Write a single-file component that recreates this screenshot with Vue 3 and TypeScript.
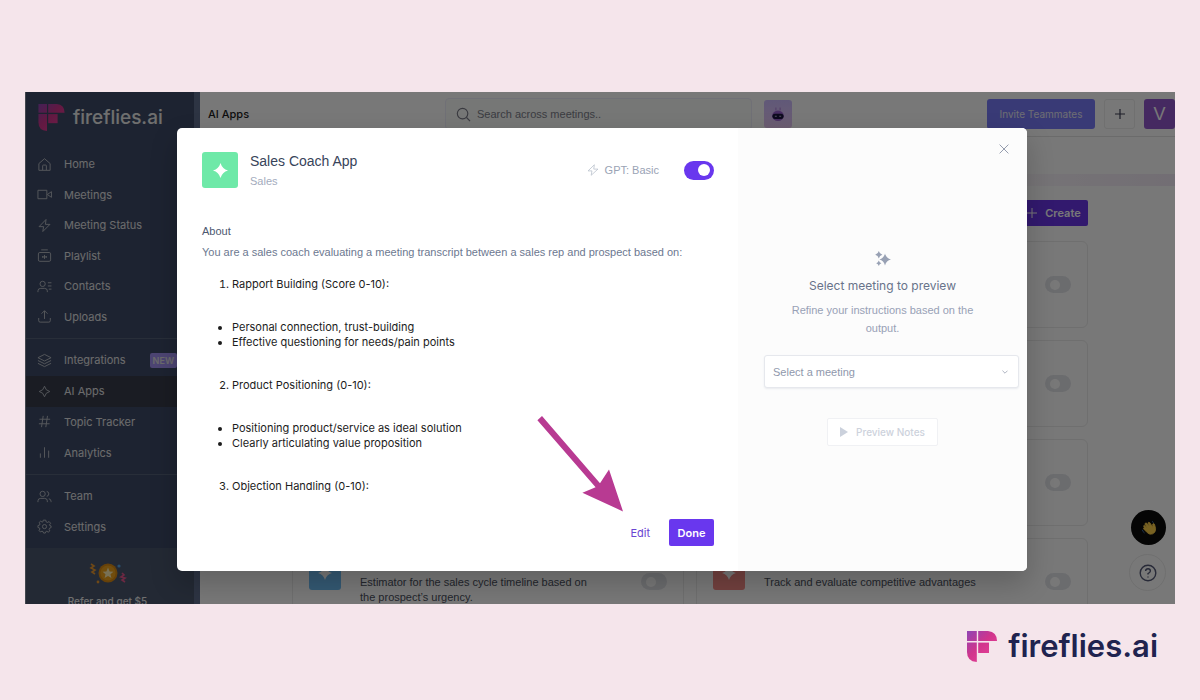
<script setup lang="ts">
interface NavItem {
  label: string
  icon: string[]
  badge?: string
  active?: boolean
}

interface AppCard {
  tone: string
  text?: string
}

const navGroups: NavItem[][] = [
  [
    { label: 'Home', icon: ['M2 7 8 1.8 14 7V14.2H2Z', 'M6 14V9.4Q6 8.6 6.8 8.6H9.2Q10 8.6 10 9.4V14'] },
    { label: 'Meetings', icon: ['M1 3.5H10.5V12.5H1Z', 'M11 8 15.4 5V11Z'] },
    { label: 'Meeting Status', icon: ['M9.6 1.6 2.2 9.2H7L6.2 14.4 13.8 6.8H9Z'] },
    { label: 'Playlist', icon: ['M3 4.8H13Q14.5 4.8 14.5 6.3V12.7Q14.5 14.2 13 14.2H3Q1.5 14.2 1.5 12.7V6.3Q1.5 4.8 3 4.8Z', 'M4.5 2H11.5', 'M8 7.4V11.6M6 8.6V10.4M10 8.6V10.4M6 9.5H10'] },
    { label: 'Contacts', icon: ['M6 2.4A2.8 2.8 0 1 1 6 8 2.8 2.8 0 1 1 6 2.4', 'M1 14V12.6Q1 10 4 10H8Q11 10 11 12.6V14', 'M11.6 4H15.4M11.6 7.4H15.4M12.6 10.8H15.4'] },
    { label: 'Uploads', icon: ['M8 10.6V2M4.8 5 8 1.8 11.2 5', 'M1.8 9.6V12.4Q1.8 14 3.4 14H12.6Q14.2 14 14.2 12.4V9.6'] }
  ],
  [
    { label: 'Integrations', badge: 'NEW', icon: ['M8 1.5 15 5 8 8.5 1 5Z', 'M1 8 8 11.5 15 8', 'M1 11 8 14.5 15 11'] },
    { label: 'AI Apps', active: true, icon: ['M8 2.4Q9 7 13.6 8 9 9 8 13.6 7 9 2.4 8 7 7 8 2.4Z'] },
    { label: 'Topic Tracker', icon: ['M6.6 2 4.8 14M11.2 2 9.4 14M2.6 5.6H14M2 10.4H13.4'] },
    { label: 'Analytics', icon: ['M3.6 9V13.6M8 2.4V13.6M12.4 6V13.6'] }
  ],
  [
    { label: 'Team', icon: ['M6 2.4A2.8 2.8 0 1 1 6 8 2.8 2.8 0 1 1 6 2.4', 'M1 14V12.6Q1 10 4 10H8Q11 10 11 12.6V14', 'M10.4 2.6Q12.6 3 12.6 5.2 12.6 7.4 10.4 7.8', 'M12.6 10.4Q15 10.8 15 13.2V14'] },
    { label: 'Settings', icon: ['M6.7 1.2H9.3L9.8 3.1 11.2 3.7 12.9 2.7 14.5 4.6 13.3 6.2 13.6 7 15 7.4V9.2L13.4 9.8 12.9 11.1 13.7 12.7 12 14 10.4 13.1 9.4 13.5 8.9 15H7L6.4 13.4 5.3 13 3.6 13.8 2.2 12.3 3.1 10.6 2.7 9.6 1 9V7L2.7 6.5 3.2 5.3 2.3 3.7 3.9 2.3 5.5 3.3 6.3 3Z', 'M8 5.9A2.2 2.2 0 1 1 8 10.3 2.2 2.2 0 1 1 8 5.9'] }
  ]
]

const cards: AppCard[] = [
  { tone: 'blue' }, { tone: 'red' },
  { tone: 'blue' }, { tone: 'red' },
  { tone: 'blue' }, { tone: 'red' },
  { tone: 'blue', text: 'Estimator for the sales cycle timeline based on the prospect’s urgency.' },
  { tone: 'red', text: 'Track and evaluate competitive advantages' }
]

const steps = [
  { title: 'Rapport Building (Score 0-10):', points: ['Personal connection, trust-building', 'Effective questioning for needs/pain points'] },
  { title: 'Product Positioning (0-10):', points: ['Positioning product/service as ideal solution', 'Clearly articulating value proposition'] },
  { title: 'Objection Handling (0-10):', points: [] as string[] }
]

const spark = 'M8 0Q9.8 6.2 16 8 9.8 9.8 8 16 6.2 9.8 0 8 6.2 6.2 8 0Z'
</script>

<template>
  <div class="page">
    <svg width="0" height="0" class="defs" aria-hidden="true">
      <defs>
        <linearGradient id="brand" x1="0" y1="0" x2="30" y2="31" gradientUnits="userSpaceOnUse">
          <stop offset="0" stop-color="#8f45b5" />
          <stop offset="0.45" stop-color="#d0358c" />
          <stop offset="1" stop-color="#f0439a" />
        </linearGradient>
        <symbol id="mark" viewBox="0 0 30 31">
          <g fill="url(#brand)">
            <path d="M0 0H9.8V10H0Z" />
            <path d="M11.2 0H21Q30 1 30 10H11.2Z" />
            <path d="M0 11.6H9.8V31Q0 30.5 0 21Z" />
            <path d="M11.2 11.6H22V22H11.2Z" />
          </g>
        </symbol>
      </defs>
    </svg>

    <div class="window">
      <aside class="sidebar">
        <div class="brand">
          <svg class="brand-mark"><use href="#mark" /></svg>
          <span>fireflies.ai</span>
        </div>
        <nav>
          <ul v-for="(group, g) in navGroups" :key="g" class="group" :class="'group-' + group.length">
            <li v-for="item in group" :key="item.label">
              <a href="#" :class="{ active: item.active }">
                <svg viewBox="0 0 16 16" class="nav-icon"><path v-for="d in item.icon" :key="d" :d="d" /></svg>
                <span>{{ item.label }}</span>
                <b v-if="item.badge">{{ item.badge }}</b>
              </a>
            </li>
          </ul>
        </nav>
        <div class="refer">
          <svg viewBox="0 0 38 22" width="38" height="22">
            <circle cx="19" cy="11" r="9.5" fill="#d98a14" />
            <circle cx="19" cy="11" r="7.6" fill="#f0a41c" />
            <path d="M19 5.6 20.6 9.4 24.4 9.7 21.5 12.2 22.4 16 19 13.9 15.6 16 16.5 12.2 13.6 9.7 17.4 9.4Z" fill="#fff0b8" />
            <path d="M2 2 5 4 2 6 6 8 3 10 6 12" fill="none" stroke="#eb9a2f" stroke-width="1.6" />
            <path d="M33 11 35 13 32 15 36 16 33 18 36 20" fill="none" stroke="#e8568c" stroke-width="1.6" />
            <circle cx="30" cy="4" r="1.6" fill="#58a6e8" />
            <circle cx="9" cy="20" r="1.4" fill="#eb9a2f" />
          </svg>
          <strong>Refer and get $5</strong>
        </div>
      </aside>

      <main class="main">
        <header class="topbar">
          <h1>AI Apps</h1>
          <label class="search">
            <svg viewBox="0 0 16 16" width="15" height="15"><circle cx="7" cy="7" r="5.6" /><path d="M11.2 11.2 15 15" /></svg>
            <input type="text" placeholder="Search across meetings.." aria-label="Search" />
          </label>
          <button class="bot" aria-label="Bot">
            <svg viewBox="0 0 16 18" width="14" height="16">
              <path d="M5.6 5V1.6M10.4 5V1.6" stroke="#a878d8" fill="none" />
              <ellipse cx="8" cy="11" rx="6.6" ry="6" fill="#9a63d0" />
              <rect x="1.6" y="8.8" width="12.8" height="5.8" rx="2.9" fill="#1c1740" />
              <path d="M4.4 11.6H6.6M9.4 11.6H11.6" stroke="#c9c2e6" stroke-width="1" />
            </svg>
          </button>
          <div class="actions">
            <button class="invite">Invite Teammates</button>
            <button class="plus" aria-label="Add"><svg viewBox="0 0 12 12" width="12" height="12"><path d="M6 1V11M1 6H11" /></svg></button>
            <button class="avatar">V</button>
          </div>
        </header>
        <div class="band"></div>
        <section class="apps">
          <button class="create">
            <svg viewBox="0 0 12 12" width="10" height="10"><path d="M6 0V12M0 6H12" /></svg>
            Create
          </button>
          <div class="cards">
            <article v-for="(card, i) in cards" :key="i" class="card">
              <div class="tile" :class="card.tone"><svg viewBox="0 0 16 16" width="14" height="14"><path :d="spark" /></svg></div>
              <p>{{ card.text }}</p>
              <input type="checkbox" class="toggle" aria-label="Enable app" />
            </article>
          </div>
        </section>
      </main>

      <button class="float help" aria-label="Help">
        <svg viewBox="0 0 18 18" width="18" height="18"><circle cx="9" cy="9" r="7.8" /><path d="M6.6 7Q6.8 4.8 9 4.8 11.4 4.8 11.4 7 11.4 8.2 9 9.6V10.6M9 12.4V13.6" /></svg>
      </button>
      <button class="float wave" aria-label="Wave">
        <svg viewBox="0 0 18 18" width="16" height="16">
          <path d="M3.2 7.6Q2.6 6 4 5.8L7 8.6 4.6 4.4Q4.8 2.8 6.2 3.4L9.6 7 8 3.2Q8.6 2 9.8 3L12.6 7 13.4 8.2 13.2 4.6Q14.2 3 15.2 4.8L16.4 9.6Q16.8 14 13 15.6 9.6 16.8 7 14.2L3 10Q2.6 8.6 3.8 8.6Z" fill="#ffd04a" stroke="#ffd04a" />
          <path d="M1.4 11Q2 13.4 4 14.6M12.4 1.6Q13.6 2 14 3" fill="none" stroke="#3d73b8" />
        </svg>
      </button>

      <div class="backdrop">
        <section class="modal" role="dialog">
          <div class="details">
            <header class="details-head">
              <div class="tile green"><svg viewBox="0 0 16 16" width="15" height="15"><path :d="spark" /></svg></div>
              <div class="names">
                <h2>Sales Coach App</h2>
                <p>Sales</p>
              </div>
              <span class="gpt">
                <svg viewBox="0 0 16 16" width="12" height="12"><path d="M9.8 1 1.4 9.2H6.6L5.6 15 14.6 6.8H9Z" /></svg>
                GPT: Basic
              </span>
              <input type="checkbox" class="toggle on" checked aria-label="Sales Coach App" />
            </header>
            <h3>About</h3>
            <p class="intro">You are a sales coach evaluating a meeting transcript between a sales rep and prospect based on:</p>
            <div class="steps">
              <template v-for="(step, i) in steps" :key="step.title">
                <ol :start="i + 1"><li>{{ step.title }}</li></ol>
                <ul v-if="step.points.length"><li v-for="p in step.points" :key="p">{{ p }}</li></ul>
              </template>
            </div>
            <footer class="buttons">
              <button class="edit">Edit</button>
              <button class="done">Done</button>
            </footer>
          </div>
          <div class="preview">
            <button class="close" aria-label="Close"><svg viewBox="0 0 10 10" width="10" height="10"><path d="M0.6 0.6 9.4 9.4M9.4 0.6 0.6 9.4" /></svg></button>
            <svg class="sparkles" viewBox="0 0 16 16" width="16" height="16">
              <path d="M10 2.4Q11.2 7.2 16 8.4 11.2 9.6 10 14.4 8.8 9.6 4.4 8.4 8.8 7.2 10 2.4Z" />
              <path d="M3.8 0Q4.5 2.9 7.4 3.7 4.5 4.5 3.8 7.4 3.1 4.5 0.2 3.7 3.1 2.9 3.8 0Z" />
              <path d="M3.8 9.6Q4.4 11.6 6.4 12.2 4.4 12.8 3.8 14.9 3.2 12.8 1.2 12.2 3.2 11.6 3.8 9.6Z" />
            </svg>
            <h4>Select meeting to preview</h4>
            <p>Refine your instructions based on the output.</p>
            <label class="picker">
              <select aria-label="Meeting"><option>Select a meeting</option></select>
              <svg viewBox="0 0 8 8" width="6" height="6"><path d="M0.6 2.2 4 5.6 7.4 2.2" /></svg>
            </label>
            <button class="notes" disabled>
              <svg viewBox="0 0 8 10" width="8" height="10"><path d="M0 0 8 5 0 10Z" /></svg>
              Preview Notes
            </button>
          </div>
          <svg class="arrow" viewBox="0 0 86 98" width="86" height="98">
            <path d="M0.4 4.2 5 0 63 67.2 72 53.4 86 95.4 45.4 76.8 58.6 71.2Z" />
          </svg>
        </section>
      </div>
    </div>

    <footer class="logo">
      <svg width="30" height="31"><use href="#mark" /></svg>
      <span>fireflies.ai</span>
    </footer>
  </div>
</template>

<style>
body {
  margin: 0;
  background: #f5e5eb;
}
</style>

<style scoped>
* {
  box-sizing: border-box;
}

.page {
  min-height: 100vh;
  padding: 92px 25px 0;
  background: #f5e5eb;
  font-family: "Liberation Sans", Arial, sans-serif;
  font-size: 11px;
}

.sidebar,
.topbar h1,
.invite,
.create,
.steps,
.buttons,
.preview h4,
.logo {
  font-family: Inter, "Open Sans", sans-serif;
}

.defs {
  position: absolute;
}

h1, h2, h3, h4, p, ul, ol {
  margin: 0;
  padding: 0;
  font-weight: 400;
}

button {
  border: 0;
  padding: 0;
  font-family: inherit;
  font-size: 11px;
  display: flex;
  align-items: center;
  justify-content: center;
}

.window {
  position: relative;
  display: flex;
  height: calc(100vh - 188px);
  overflow: hidden;
  background: #fff;
}

.sidebar {
  flex: 0 0 175px;
  background: #3f4c68;
  border-right: 6px solid #61708f;
  border-left: 1px solid #8f97a6;
  color: #ececec;
}

.brand {
  display: flex;
  align-items: center;
  gap: 8px;
  height: 51px;
  padding-left: 12px;
  font-size: 19px;
  font-weight: 500;
}

.brand-mark {
  width: 27px;
  height: 27px;
}

.group {
  display: grid;
  grid-auto-rows: 1fr;
  box-sizing: content-box;
  padding: 6px 0;
  border-bottom: 1px solid #56627a;
  list-style: none;
}

.group-6 {
  height: 183px;
}

.group-4 {
  height: 123px;
}

.group-2 {
  height: 61px;
  border-bottom: 0;
}

.group a {
  display: flex;
  align-items: center;
  height: 100%;
  padding-left: 11px;
  color: #e4e4e6;
  text-decoration: none;
}

.group a.active {
  background: #383d4c;
}

.nav-icon {
  width: 15px;
  height: 15px;
  margin-right: 12px;
  fill: none;
  stroke: #b8bcc4;
  stroke-linejoin: round;
}

.group b {
  margin-left: 24px;
  padding: 0 3px;
  border-radius: 2px;
  background: #a493f4;
  font-size: 9px;
  font-weight: 600;
  line-height: 15px;
}

.refer {
  display: flex;
  flex-direction: column;
  align-items: center;
  gap: 11px;
  height: 100px;
  padding: 14px 5px 0 0;
  background: #4b5870;
  font-size: 10px;
}

.refer strong {
  font-weight: 500;
}

.main {
  flex: 1;
  min-width: 0;
}

.topbar {
  display: flex;
  align-items: center;
  height: 45px;
  padding-left: 8px;
  border-bottom: 1px solid #e4e4e4;
}

.topbar h1 {
  flex: 0 1 237px;
  font-size: 11px;
  font-weight: 500;
  color: #1d1d22;
}

.search {
  display: flex;
  flex: 0 1 307px;
  align-items: center;
  gap: 6px;
  height: 32px;
  padding-left: 10px;
  border: 1px solid #efedfa;
  border-radius: 4px;
  background: #fafcfb;
}

.search svg,
.plus svg,
.create svg {
  fill: none;
  stroke: #7b7c88;
  stroke-width: 1.2;
}

.search input {
  flex: 1;
  min-width: 0;
  border: 0;
  background: none;
  font: inherit;
  padding: 0;
}

.search input::placeholder {
  color: #80828c;
}

.bot {
  width: 28px;
  height: 28px;
  margin-left: 12px;
  border-radius: 3px;
  background: linear-gradient(#cdbcff, #e6c6f2);
}

.actions {
  display: flex;
  gap: 9px;
  margin-left: auto;
}

.actions button {
  width: 31px;
  height: 30px;
  border-radius: 3px;
}

.actions .invite {
  width: 108px;
  background: #7a7cfa;
  color: #e8e8f4;
  font-size: 10px;
}

.actions .plus {
  border: 1px solid #ededed;
  background: #fff;
}

.plus svg {
  stroke: #3c3f55;
}

.actions .avatar {
  background: #9358cf;
  color: #fff;
  font-size: 18px;
}

.band {
  height: 12px;
  margin-top: 37px;
  background: linear-gradient(90deg, #fff 75%, #f3e9f6);
}

.apps {
  margin: 14px 87px 0 92px;
}

.create {
  gap: 8px;
  width: 76px;
  height: 26px;
  padding-left: 8px;
  margin-left: auto;
  border-radius: 2px;
  background: #6a37ea;
  color: #fff;
  font-weight: 600;
}

.create svg {
  stroke: #fff;
}

.cards {
  display: grid;
  grid-template-columns: 1fr 1fr;
  gap: 12px;
  margin-top: 15px;
}

.card {
  display: flex;
  align-items: center;
  height: 87px;
  padding: 16px;
  border: 1px solid #ececec;
  border-radius: 6px;
}

.card p {
  flex: 1;
  align-self: flex-start;
  padding: 20px 36px 0 19px;
  line-height: 15px;
  color: #4b5160;
}

.tile {
  display: flex;
  align-items: center;
  justify-content: center;
  align-self: flex-start;
  flex: 0 0 32px;
  height: 35px;
  border-radius: 3px;
}

.tile svg {
  fill: #fff;
}

.blue {
  background: #6fbdf5;
}

.red {
  background: #f58a86;
}

.toggle {
  appearance: none;
  display: flex;
  align-items: center;
  flex: 0 0 26px;
  height: 17px;
  margin: 0;
  padding: 0 5px;
  border-radius: 9px;
  background: #e4e5ea;
}

.toggle::before {
  content: "";
  width: 10px;
  height: 10px;
  border-radius: 50%;
  background: #fff;
}

.toggle.on {
  flex-basis: 30px;
  height: 19px;
  justify-content: flex-end;
  padding: 0 4px;
  border-radius: 10px;
  background: #6937ee;
}

.toggle.on::before {
  width: 12px;
  height: 12px;
}

.float {
  position: absolute;
  border-radius: 50%;
}

.wave {
  right: 9px;
  bottom: 59px;
  width: 35px;
  height: 35px;
  background: #0b0b0b;
}

.help {
  right: 9px;
  bottom: 13px;
  width: 37px;
  height: 37px;
  border: 1px solid #ededed;
  background: #fff;
}

.help svg {
  fill: none;
  stroke: #555a78;
  stroke-width: 1.4;
}

.backdrop {
  position: absolute;
  inset: 0;
  display: flex;
  padding: 36px 148px 33px 152px;
  background: rgba(0, 0, 0, 0.53);
}

.modal {
  position: relative;
  flex: 1;
  display: flex;
  border-radius: 5px;
  background: #fff;
  box-shadow: 0 12px 28px rgba(0, 0, 0, 0.2);
}

.details {
  display: flex;
  flex: 1;
  flex-direction: column;
  padding: 24px 24px 25px 25px;
  border-radius: 5px 0 0 5px;
}

.details-head {
  display: flex;
  align-items: center;
  height: 36px;
}

.tile.green {
  flex-basis: 36px;
  height: 36px;
  background: #6ee9a8;
}

.names {
  flex: 1;
  padding: 2px 0 0 12px;
  line-height: 20px;
}

.names h2 {
  font-size: 14px;
  color: #38445a;
}

.names p {
  color: #a3abbd;
}

.gpt {
  display: flex;
  align-items: center;
  gap: 6px;
  margin-right: 25px;
  color: #9aa3b5;
}

.gpt svg {
  fill: none;
  stroke: #b6bdca;
}

.details h3 {
  margin-top: 33px;
  font-size: 11px;
  line-height: 20px;
  color: #4c5870;
}

.intro {
  line-height: 22px;
  color: #6c7890;
}

.steps {
  margin-top: 13px;
  padding-left: 30px;
  line-height: 16px;
  color: #1c1c1c;
}

.steps ul {
  margin: 28px 0 27px;
  line-height: 15px;
}

.buttons {
  display: flex;
  gap: 19px;
  justify-content: flex-end;
  margin-top: auto;
}

.buttons button {
  height: 27px;
  border-radius: 2px;
}

.edit {
  background: none;
  color: #6a45d2;
}

.buttons .done {
  width: 45px;
  background: #6937ee;
  color: #fff;
  font-weight: 600;
}

.preview {
  display: flex;
  flex: 0 0 289px;
  flex-direction: column;
  align-items: center;
  border-radius: 0 5px 5px 0;
  background: #fcfcfc;
  text-align: center;
}

.close {
  align-self: flex-end;
  margin: 16px 18px 0 0;
  background: none;
}

.close svg,
.picker svg {
  fill: none;
  stroke: #959cae;
}

.sparkles {
  margin-top: 97px;
  fill: #98a1b4;
}

.preview h4 {
  margin-top: 9px;
  font-size: 12px;
  line-height: 20px;
  color: #68738a;
}

.preview p {
  width: 200px;
  margin-top: 5px;
  line-height: 18px;
  color: #98a1b6;
}

.picker {
  position: relative;
  display: flex;
  align-items: center;
  align-self: stretch;
  margin: 18px 8px 0 26px;
}

.picker select {
  appearance: none;
  width: 100%;
  height: 33px;
  padding: 0 8px;
  border: 1px solid #e6e8ed;
  border-radius: 3px;
  background: #fff;
  box-shadow: 0 1px 2px #e9ebef;
  color: #8f98ac;
  font: inherit;
}

.picker svg {
  position: absolute;
  right: 11px;
}

.notes {
  gap: 8px;
  width: 111px;
  height: 28px;
  margin-top: 30px;
  border: 1px solid #f0f1f4;
  border-radius: 2px;
  background: #fff;
  color: #cdd2dc;
  font-family: Inter, "Open Sans", sans-serif;
  font-size: 10px;
  font-weight: 500;
}

.notes svg {
  fill: #cbd1dc;
}

.arrow {
  position: absolute;
  left: 360px;
  top: 288px;
  fill: #b83a92;
}

.logo {
  display: flex;
  align-items: center;
  justify-content: flex-end;
  gap: 11px;
  padding: 21px 17px 0 0;
  margin-right: -25px;
  padding-right: 42px;
  color: #20234f;
  font-size: 31px;
  font-weight: 600;
  line-height: 42px;
}
</style>
